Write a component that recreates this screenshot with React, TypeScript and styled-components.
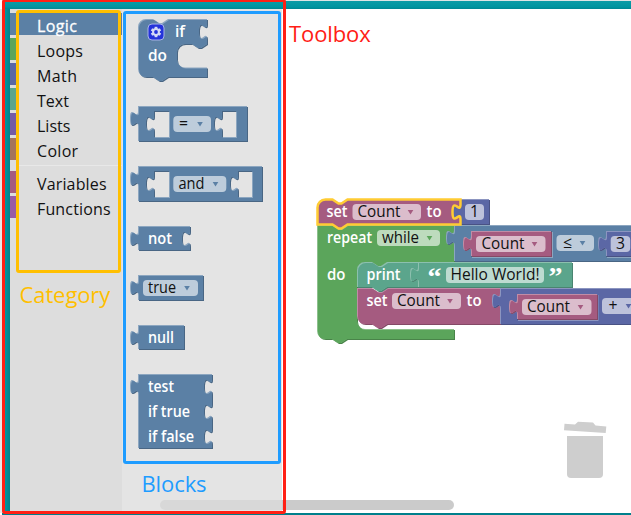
import React, { useId } from "react";
import styled, { createGlobalStyle } from "styled-components";

const GlobalStyle = createGlobalStyle`
  * { box-sizing: border-box; }
  html, body { margin: 0; overflow: hidden; background: #fff; }
  body { font-family: "Open Sans", "Noto Sans", sans-serif; }
`;

const hue = {
  logic: { main: "#5b80a5", light: "#8ca6c0", dark: "#496684" },
  loops: { main: "#5ba55b", light: "#8cc08c", dark: "#498449" },
  math: { main: "#5b67a5", light: "#8c95c0", dark: "#495284" },
  text: { main: "#5ba58c", light: "#8cc0ae", dark: "#498470" },
  lists: { main: "#745ba5", light: "#9e8cc0", dark: "#5d4984" },
  color: { main: "#a5745b", light: "#c09e8c", dark: "#845d49" },
  variables: { main: "#a55b80", light: "#c08ca6", dark: "#844966" },
  functions: { main: "#995ba5", light: "#b88cc0", dark: "#7a4984" },
};
type Hue = keyof typeof hue;

/* ---------- page frame ---------- */

const Frame = styled.div`
  position: relative;
  display: flex;
  flex-direction: column;
  width: 631px;
  height: 515px;
  overflow: hidden;
  background: #fff;
`;

const TitleStrip = styled.div`
  height: 9px;
  flex: none;
  margin-left: 5px;
  border-top: 1px solid #dde5e5;
  background: linear-gradient(#0b9ba6, #0095a0 70%, #008792);
`;

const Body = styled.div`
  display: flex;
  flex: 1;
  min-height: 0;
`;

const SideRail = styled.div`
  width: 10px;
  flex: none;
  border-left: 5px solid #e6e9e9;
  background: linear-gradient(90deg, #0095a0, #00808a);
`;

const BottomStrip = styled.div`
  height: 2px;
  flex: none;
  margin-left: 2px;
  background: #00808c;
`;

/* ---------- toolbox ---------- */

const CategoryPanel = styled.nav`
  display: flex;
  flex-direction: column;
  width: 112px;
  flex: none;
  padding-top: 4px;
  background: #ddd;
`;

const CategoryRow = styled.div<{ $hue: Hue; $selected?: boolean }>`
  height: 22px;
  flex: none;
  margin-bottom: 3px;
  padding-left: 19px;
  border-left: 8px solid ${(p) => hue[p.$hue].main};
  background: ${(p) => (p.$selected ? hue[p.$hue].main : "transparent")};
  color: ${(p) => (p.$selected ? "#fff" : "#111")};
  -webkit-text-stroke: ${(p) => (p.$selected ? "0.3px #fff" : "0")};
`;

const CategoryName = styled.span<{ $spacing: number }>`
  display: block;
  font-size: 16px;
  line-height: 27px;
  letter-spacing: ${(p) => p.$spacing}px;
`;

const Separator = styled.div`
  height: 1px;
  flex: none;
  margin: 2px 0 5px 8px;
  background: #e8e8e8;
`;

const Flyout = styled.div`
  display: flex;
  flex-direction: column;
  width: 160px;
  flex: none;
  padding: 10px 0 0 16px;
  background: #e4e4e4;
`;

const FlyoutBlock = styled.svg<{ $gap: number }>`
  display: block;
  flex: none;
  overflow: visible;
  margin-bottom: ${(p) => p.$gap}px;
`;

/* ---------- workspace ---------- */

const Workspace = styled.main`
  flex: 1;
  min-width: 0;
  background: #fff;
`;

const BlockCanvas = styled.svg`
  position: absolute;
  left: 0;
  top: 0;
`;

const Scrollbar = styled.div`
  position: absolute;
  left: 160px;
  top: 500px;
  width: 294px;
  height: 10px;
  border-radius: 5px;
  background: linear-gradient(90deg, #d8d8d8 122px, #cbcbcb 122px);
`;

const TrashCan = styled.svg`
  position: absolute;
  left: 560px;
  top: 418px;
`;

/* ---------- annotations ---------- */

const Outline = styled.div<{ $x: number; $y: number; $w: number; $h: number; $color: string }>`
  position: absolute;
  left: ${(p) => p.$x}px;
  top: ${(p) => p.$y}px;
  width: ${(p) => p.$w}px;
  height: ${(p) => p.$h}px;
  border: 3px solid ${(p) => p.$color};
  border-radius: 3px;
`;

const Caption = styled.div<{ $x: number; $y: number; $color: string; $spacing: number }>`
  position: absolute;
  left: ${(p) => p.$x}px;
  top: ${(p) => p.$y}px;
  color: ${(p) => p.$color};
  font-size: 22px;
  line-height: 30px;
  letter-spacing: ${(p) => p.$spacing}px;
  white-space: nowrap;
`;

/* ---------- block parts ---------- */

const Label = styled.text<{ $dark?: boolean }>`
  font-size: ${(p) => (p.$dark ? 16 : 15.5)}px;
  font-weight: ${(p) => (p.$dark ? 400 : 600)};
  fill: ${(p) => (p.$dark ? "#111" : "#fff")};
`;

const QuoteMark = styled.text`
  font-family: "Liberation Serif", serif;
  font-weight: 700;
  font-size: 25px;
  fill: #fff;
`;

const TAB_UP = "c 0,-10 -8,8 -8,-7.5 s 8,2.5 8,-7.5";
const TAB_DOWN = "c 0,10 -8,-8 -8,7.5 s 8,-2.5 8,7.5";
const NOTCH_LEFT = "l -6,4 -3,0 -6,-4";
const NOTCH_RIGHT = "l 6,4 3,0 6,-4";

const hole = (x: number, y: number, w: number, h: number) =>
  `M ${x},${y} v 5 ${TAB_DOWN} V ${y + h} h ${w} V ${y} z`;

const valueBlock = (w: number, h: number) => `M 0,0 H ${w} V ${h} H 0 V 20 ${TAB_UP} z`;

const stackBlock = (w: number, h: number) =>
  `M 0,8 A 8,8 0 0 1 8,0 H 15 ${NOTCH_RIGHT} H ${w} v 5 ${TAB_DOWN} V ${h} H 30 ${NOTCH_LEFT} H 0 z`;

function Shape({ d, color, x = 0, y = 0 }: { d: string; color: Hue; x?: number; y?: number }) {
  const id = useId();
  const c = hue[color];
  return (
    <g transform={`translate(${x},${y})`} fillRule="evenodd">
      <clipPath id={id}>
        <path d={d} clipRule="evenodd" />
      </clipPath>
      <path d={d} fill={c.dark} transform="translate(1,1)" />
      <path d={d} fill={c.light} />
      <g clipPath={`url(#${id})`}>
        <path d={d} fill={c.main} transform="translate(1,1)" />
      </g>
    </g>
  );
}

function Word({ x, y, w, dark, children }: { x: number; y: number; w: number; dark?: boolean; children: string }) {
  return (
    <Label x={x} y={y} $dark={dark} textLength={w} lengthAdjust="spacingAndGlyphs">
      {children}
    </Label>
  );
}

function Field(p: { x: number; y: number; w: number; text: string; textX: number; textW: number; arrow?: number; color: Hue }) {
  return (
    <g>
      <rect x={p.x} y={p.y} width={p.w} height={16} rx={4} fill="#fff" fillOpacity={0.6} />
      <Word x={p.textX} y={p.y + 13} w={p.textW} dark>
        {p.text}
      </Word>
      {p.arrow !== undefined && (
        <path d={`M ${p.arrow - 2.8},${p.y + 6} h 5.6 l -2.8,4.6 z`} fill={hue[p.color].main} />
      )}
    </g>
  );
}

function Gear() {
  return (
    <g transform="translate(10,5)">
      <rect x={0} y={0} width={16} height={16} rx={4} fill="#2433db" stroke="#a8b2e8" strokeWidth={1} />
      <g fill="#d5daf6" transform="translate(8,8)">
        {[0, 60, 120].map((a) => (
          <rect key={a} x={-1.4} y={-5.2} width={2.8} height={10.4} transform={`rotate(${a})`} />
        ))}
        <circle r={3.9} />
        <circle r={1.9} fill="#2433db" />
      </g>
    </g>
  );
}

const IF_SHAPE = `M 0,8 A 8,8 0 0 1 8,0 H 15 ${NOTCH_RIGHT} H 69 v 5 ${TAB_DOWN} V 25 ${NOTCH_LEFT} h -7 a 8,8 0 0 0 -8,8 v 7.5 a 8,8 0 0 0 8,8 H 69 V 58 H 30 ${NOTCH_LEFT} H 8 a 8,8 0 0 1 -8,-8 z`;
const TEST_SHAPE = `M 0,0 H 74 v 5 ${TAB_DOWN} v 10 ${TAB_DOWN} v 10 ${TAB_DOWN} V 74 H 0 V 20 ${TAB_UP} z`;
const NOT_SHAPE = `M 0,0 H 52 v 5 ${TAB_DOWN} V 24 H 0 V 20 ${TAB_UP} z`;
const REPEAT_SHAPE = `M 0,0 H 15 ${NOTCH_RIGHT} H 137 v 5 ${TAB_DOWN} V 37 H 70 ${NOTCH_LEFT} h -7 a 8,8 0 0 0 -8,8 v 51 a 8,8 0 0 0 8,8 H 137 V 114 H 30 ${NOTCH_LEFT} H 8 a 8,8 0 0 1 -8,-8 z`;
const INNER_SET_SHAPE = `M 0,0 H 15 ${NOTCH_RIGHT} H 143 v 5 ${TAB_DOWN} V 36 H 30 ${NOTCH_LEFT} H 8 a 8,8 0 0 1 -8,-8 z`;
const SELECTED_SET = stackBlock(143, 25);

function LogicBlocks() {
  return (
    <Flyout>
      <FlyoutBlock width={70} height={58} $gap={29}>
        <Shape d={IF_SHAPE} color="logic" />
        <Gear />
        <Word x={37} y={17.5} w={10}>if</Word>
        <Word x={10} y={42} w={19}>do</Word>
      </FlyoutBlock>
      <FlyoutBlock width={110} height={35} $gap={25}>
        <Shape d={`${valueBlock(109, 35)} ${hole(16, 5, 15, 26)} ${hole(84, 5, 14, 26)}`} color="logic" />
        <Field x={35.3} y={10} w={37.7} text="=" textX={41} textW={9} arrow={62} color="logic" />
      </FlyoutBlock>
      <FlyoutBlock width={125} height={35} $gap={25}>
        <Shape d={`${valueBlock(124, 35)} ${hole(16, 5, 15, 26)} ${hole(100, 5, 14, 26)}`} color="logic" />
        <Field x={35.3} y={10} w={53} text="and" textX={40.5} textW={26} arrow={77.5} color="logic" />
      </FlyoutBlock>
      <FlyoutBlock width={52} height={24} $gap={25}>
        <Shape d={NOT_SHAPE} color="logic" />
        <Word x={10} y={18} w={24}>not</Word>
      </FlyoutBlock>
      <FlyoutBlock width={65} height={25} $gap={25}>
        <Shape d={valueBlock(65, 25)} color="logic" />
        <Field x={5} y={5} w={55} text="true" textX={10} textW={28} arrow={49} color="logic" />
      </FlyoutBlock>
      <FlyoutBlock width={46} height={24} $gap={25}>
        <Shape d={valueBlock(46, 24)} color="logic" />
        <Word x={10} y={18} w={26}>null</Word>
      </FlyoutBlock>
      <FlyoutBlock width={75} height={74} $gap={0}>
        <Shape d={TEST_SHAPE} color="logic" />
        <Word x={10} y={18} w={26}>test</Word>
        <Word x={10} y={43} w={42}>if true</Word>
        <Word x={10} y={68} w={46}>if false</Word>
      </FlyoutBlock>
    </Flyout>
  );
}

function Program() {
  return (
    <BlockCanvas width={631} height={515}>
      <Shape x={317} y={225} d={REPEAT_SHAPE} color="loops" />
      <Word x={327} y={243} w={45}>repeat</Word>
      <Field x={377} y={230} w={63} text="while" textX={382} textW={37} arrow={429.5} color="loops" />
      <Word x={327} y={279.5} w={18.5}>do</Word>

      <Shape x={454} y={225} d={`${valueBlock(190, 36)} ${hole(17, 6, 81, 26)} ${hole(152, 6, 40, 26)}`} color="logic" />
      <Shape x={471} y={231} d={valueBlock(80, 25)} color="variables" />
      <Field x={476} y={236} w={69.5} text="Count" textX={481.5} textW={43} arrow={534.5} color="variables" />
      <Field x={556.5} y={235} w={37.5} text="≤" textX={563} textW={9} arrow={582.5} color="logic" />
      <Shape x={606} y={231} d={valueBlock(40, 25)} color="math" />
      <Field x={610.7} y={236} w={19.5} text="3" textX={616} textW={9} color="math" />

      <Shape x={357} y={288} d={INNER_SET_SHAPE} color="variables" />
      <Word x={366.5} y={306} w={21}>set</Word>
      <Field x={392} y={293} w={69} text="Count" textX={397} textW={43} arrow={450} color="variables" />
      <Word x={466.5} y={306} w={15}>to</Word>
      <Shape x={500} y={288} d={`${valueBlock(140, 36)} ${hole(17, 6, 80.5, 26)}`} color="math" />
      <Shape x={517} y={294} d={valueBlock(80, 25)} color="variables" />
      <Field x={522} y={299} w={69.5} text="Count" textX={527} textW={43} arrow={580.5} color="variables" />
      <Field x={602} y={298} w={40} text="+" textX={608.5} textW={9} arrow={628.5} color="math" />

      <Shape x={357} y={262} d={stackBlock(61, 25)} color="text" />
      <Word x={366.5} y={280} w={34}>print</Word>
      <Shape x={418} y={262} d={valueBlock(154, 25)} color="text" />
      <QuoteMark x={427.5} y={284.5} textLength={14} lengthAdjust="spacingAndGlyphs">“</QuoteMark>
      <Field x={446} y={267} w={98} text="Hello World!" textX={450.5} textW={89} color="text" />
      <QuoteMark x={548.5} y={284.5} textLength={14} lengthAdjust="spacingAndGlyphs">”</QuoteMark>

      <Shape x={460} y={199} d={valueBlock(29, 25)} color="math" />
      <Field x={465} y={204} w={19} text="1" textX={470} textW={9} color="math" />
      <Shape x={317} y={199} d={SELECTED_SET} color="variables" />
      <path d={SELECTED_SET} transform="translate(317.5,199.5)" fill="none" stroke="#fc3" strokeWidth={2.5} />
      <Word x={326.5} y={217} w={21}>set</Word>
      <Field x={352.5} y={204} w={68.5} text="Count" textX={357.5} textW={43} arrow={410.5} color="variables" />
      <Word x={426.5} y={217} w={15}>to</Word>
    </BlockCanvas>
  );
}

const categories: { name: string; hue: Hue; spacing: number }[] = [
  { name: "Logic", hue: "logic", spacing: 0.4 },
  { name: "Loops", hue: "loops", spacing: 0.2 },
  { name: "Math", hue: "math", spacing: 0.4 },
  { name: "Text", hue: "text", spacing: 0 },
  { name: "Lists", hue: "lists", spacing: 0 },
  { name: "Color", hue: "color", spacing: 0.3 },
  { name: "Variables", hue: "variables", spacing: 0.15 },
  { name: "Functions", hue: "functions", spacing: 0.15 },
];

export default function App() {
  return (
    <Frame>
      <GlobalStyle />
      <TitleStrip />
      <Body>
        <SideRail />
        <CategoryPanel>
          {categories.map((c, i) => (
            <React.Fragment key={c.name}>
              {i === 6 && <Separator />}
              <CategoryRow $hue={c.hue} $selected={i === 0}>
                <CategoryName $spacing={c.spacing}>{c.name}</CategoryName>
              </CategoryRow>
            </React.Fragment>
          ))}
        </CategoryPanel>
        <LogicBlocks />
        <Workspace />
      </Body>
      <BottomStrip />
      <Program />
      <Scrollbar />
      <TrashCan width={50} height={64} fill="#cecece">
        <path d="M 4.5,5.8 L 15,6.4 L 18,3.8 L 33,4.6 L 35.5,7.6 L 46.3,8.4 L 45.7,15 L 4,12.3 z" />
        <path d="M 7,18 H 43 V 56 a 4,4 0 0 1 -4,4 H 11 a 4,4 0 0 1 -4,-4 z" />
      </TrashCan>
      <Outline $x={2} $y={-1} $w={284} $h={515} $color="#ff2015" />
      <Outline $x={16} $y={10} $w={105} $h={263} $color="#ffbf00" />
      <Outline $x={123} $y={11} $w={158} $h={453} $color="#1e9cff" />
      <Caption $x={289} $y={18} $color="#ff2015" $spacing={-0.1}>Toolbox</Caption>
      <Caption $x={19.5} $y={279} $color="#ffbf00" $spacing={-0.1}>Category</Caption>
      <Caption $x={141.5} $y={468} $color="#1e9cff" $spacing={-0.1}>Blocks</Caption>
    </Frame>
  );
}
